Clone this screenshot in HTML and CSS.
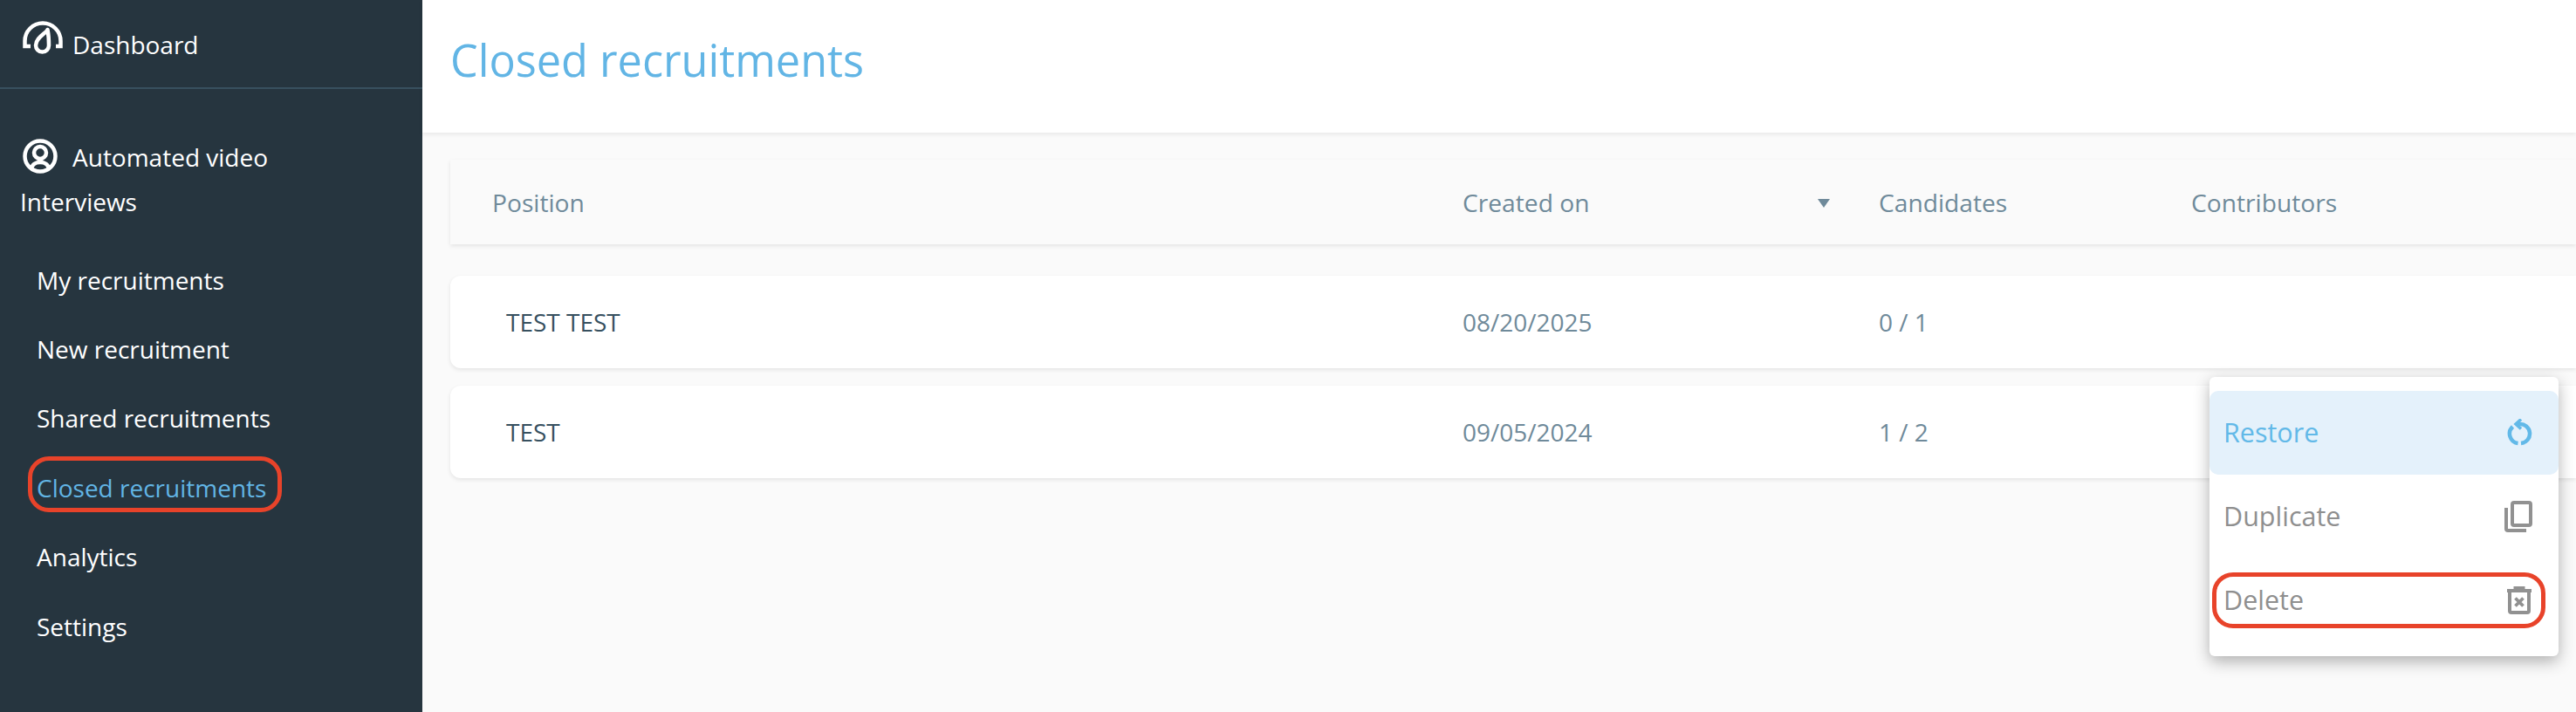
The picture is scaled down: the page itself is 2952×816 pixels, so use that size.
FILE: index.html
```html
<!DOCTYPE html>
<html lang="en">
<head>
<meta charset="utf-8">
<title>Closed recruitments</title>
<link rel="stylesheet" href="styles.css">
</head>
<body>
<div class="app">
  <aside class="sidebar">
    <a class="dash">
      <svg class="ic-dash" width="46" height="38" viewBox="0 0 46 38" fill="none" stroke="#fff" stroke-width="4.500">
        <path d="M9 29H2.500V23A20.500 20.500 0 0 1 43.500 23V29H38"/>
        <path d="M28.500 10C27 14 15 19 15 28A7.500 7.500 0 0 0 30 28C30 22 29.500 15 28.500 10Z" stroke-linejoin="round"/>
      </svg>
      <span>Dashboard</span>
    </a>
    <div class="section">
      <svg class="ic-user" width="40" height="40" viewBox="0 0 40 40" fill="none" stroke="#fff" stroke-width="4.500">
        <circle cx="20" cy="20" r="17.500"/>
        <circle cx="20" cy="16" r="7"/>
        <path d="M10 35C10.500 29.500 15 27 20 27S29.500 29.500 30 35"/>
      </svg>
      <span class="sec-text">Automated video<br><span class="wrap">Interviews</span></span>
    </div>
    <nav class="nav">
      <a class="nav-item">My recruitments</a>
      <a class="nav-item">New recruitment</a>
      <a class="nav-item">Shared recruitments</a>
      <a class="nav-item active"><span class="hl-text">Closed recruitments</span></a>
      <a class="nav-item">Analytics</a>
      <a class="nav-item">Settings</a>
    </nav>
  </aside>
  <main class="main">
    <header class="top"><h1>Closed recruitments</h1></header>
    <section class="content">
      <div class="thead grid">
        <div class="c-pos">Position</div>
        <div class="c-date">Created on<span class="sort"></span></div>
        <div>Candidates</div>
        <div>Contributors</div>
      </div>
      <div class="row grid">
        <div class="c-pos name">TEST TEST</div>
        <div>08/20/2025</div>
        <div>0 / 1</div>
        <div></div>
      </div>
      <div class="row grid">
        <div class="c-pos name">TEST</div>
        <div>09/05/2024</div>
        <div>1 / 2</div>
        <div></div>
      </div>
    </section>
    <div class="menu">
      <div class="mi hover">
        <span>Restore</span>
        <svg width="30" height="32" viewBox="0 0 30 32" fill="none" stroke="#62b9e8" stroke-width="4.500">
          <path d="M7.500 9A11 11 0 0 0 13.500 28"/>
          <path d="M17 28A11 11 0 0 0 15 6H12"/>
          <path d="M17 .5L11 6L17 11.500" stroke-width="3.500"/>
        </svg>
      </div>
      <div class="mi">
        <span>Duplicate</span>
        <svg width="32" height="36" viewBox="0 0 32 36" fill="none" stroke="#919191" stroke-width="4">
          <rect x="9" y="2" width="21" height="26" rx="2"/>
          <path d="M2 8V32C2 33.500 2.500 34 4 34H25"/>
        </svg>
      </div>
      <div class="mi del">
        <span>Delete</span>
        <svg width="30" height="32" viewBox="0 0 30 32" fill="none" stroke="#919191" stroke-width="4">
          <path d="M1 5H29" stroke-width="4"/>
          <path d="M10 3.500V1.500H20V3.500" stroke-width="3"/>
          <path d="M4 6V28C4 29.500 4.500 30 6 30H24C25.500 30 26 29.500 26 28V6"/>
          <path d="M10.500 13.500L19.500 22.500M19.500 13.500L10.500 22.500" stroke-width="3.800"/>
        </svg>
      </div>
    </div>
  </main>
</div>
</body>
</html>
```
FILE: styles.css
```css
* { box-sizing: border-box; }
html, body { margin: 0; height: 100%; overflow: hidden; }
body { font-family: "Open Sans", "Liberation Sans", sans-serif; font-size: 28px; background: #fafafa; }
.app { display: flex; height: 816px; width: 2952px; overflow: hidden; }

.sidebar { width: 484px; flex: none; background: #26353f; color: #fff; }
.dash { display: flex; align-items: center; height: 102px; padding: 0 0 0 26px; border-bottom: 2px solid #38505f; line-height: 38px; }
.ic-dash { margin: -14px 11px 0 0; flex: none; }
.dash span { margin-top: 2px; }
.section { display: flex; align-items: flex-start; padding: 53px 0 0 22px; line-height: 51px; }
.ic-user { flex: none; margin: 4px 17px 0 4px; }
.sec-text { display: block; }
.wrap { margin-left: -60px; }
.nav { padding-top: 24px; }
.nav-item { display: flex; align-items: center; height: 79.4px; padding-left: 42px; }
.active { color: #62b5e5; }
.hl-text { position: relative; }
.hl-text::after { content: ""; position: absolute; left: -10px; right: -18px; top: -17px; bottom: -9px; border: 5px solid #e8432a; border-radius: 24px; }

.main { flex: 1; min-width: 0; position: relative; }
.top { height: 152px; background: #fff; display: flex; align-items: center; padding-left: 32px; box-shadow: 0 2px 5px rgba(0,0,0,.08); }
h1 { margin: 0; font-size: 50.400px; font-weight: 400; color: #62b5e5; position: relative; top: -8px; }
.content { padding: 31px 0 0 32px; }
.grid { display: grid; grid-template-columns: 1160px 477px 358px 1fr; align-items: center; color: #6f8a9a; }
.thead { height: 97px; background: #fafafa; box-shadow: 0 2px 5px rgba(0,0,0,.09); margin-bottom: 36px; font-size: 28.200px; }
.thead .c-pos { padding-left: 48px; }
.c-date { position: relative; }
.sort { position: absolute; left: 407px; top: 15px; width: 0; height: 0; border-left: 7px solid transparent; border-right: 7px solid transparent; border-top: 10px solid #6f8a9a; }
.row { height: 106px; background: #fff; border-radius: 12px 0 0 12px; box-shadow: 0 2px 5px rgba(0,0,0,.09); margin-bottom: 20px; }
.row .c-pos { padding-left: 64px; }
.name { color: #37505f; }

.menu { position: absolute; left: 2048px; top: 432px; width: 400px; height: 320px; padding: 16px 0; background: #fff; border-radius: 6px; box-shadow: 0 6px 18px rgba(0,0,0,.3); color: #8f8f8f; font-size: 30.500px; }
.mi { display: flex; align-items: center; justify-content: space-between; height: 96px; padding: 0 30px 0 16px; position: relative; }
.mi > span { position: relative; top: -1px; }
.mi svg { flex: none; }
.hover { background: #e4f1fb; color: #62b9e8; border-radius: 10px; }
.del::after { content: ""; position: absolute; left: 3px; right: 15px; top: 16px; bottom: 16px; border: 5px solid #e8432a; border-radius: 24px; }
```
